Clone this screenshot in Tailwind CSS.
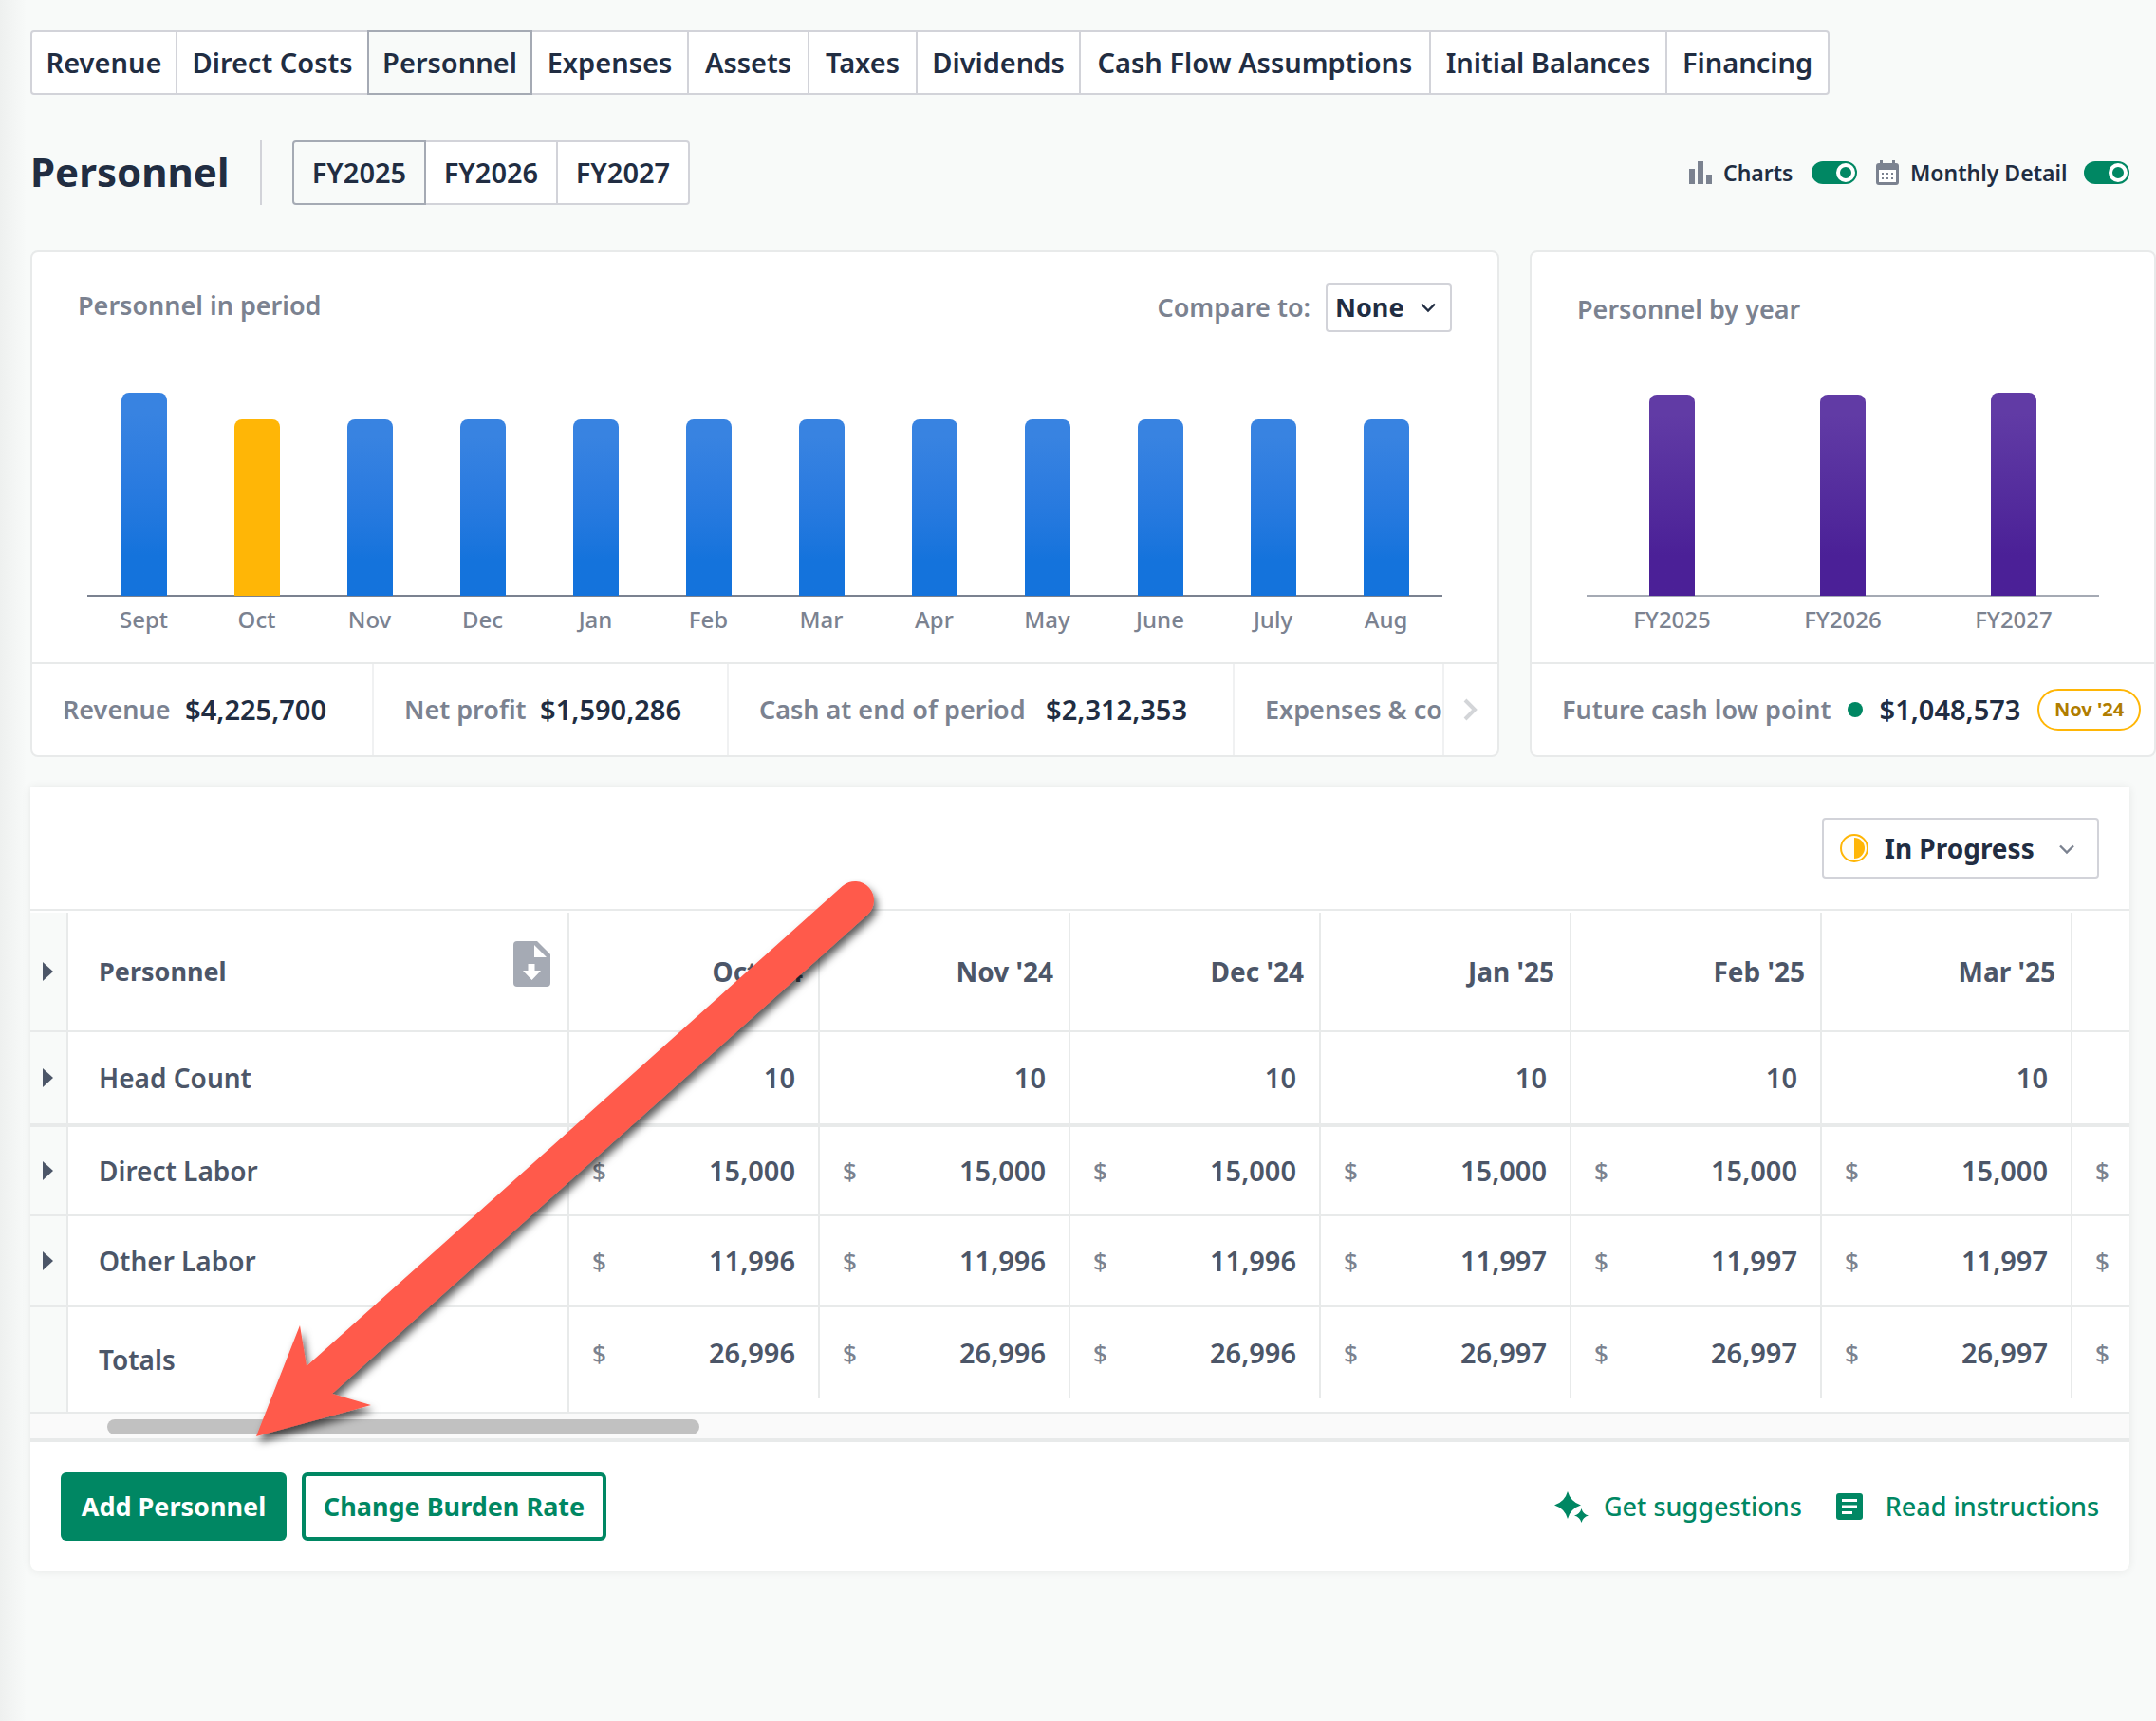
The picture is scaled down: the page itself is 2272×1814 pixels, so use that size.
<!DOCTYPE html>
<html lang="en">
<head>
<meta charset="utf-8">
<title>Personnel</title>
<script src="https://cdn.jsdelivr.net/npm/@tailwindcss/browser@4"></script>
</head>
<body class="relative min-h-screen overflow-x-hidden bg-[#f8faf9] pt-8 font-['Noto_Sans',sans-serif] text-[28px] leading-9 text-[#212d42]">
<div class="absolute inset-y-0 left-0 w-7 bg-linear-to-r from-[#eef0ef] to-[#f8faf9]"></div>

<div class="relative">
<nav class="flex px-8 text-[29px] font-semibold whitespace-nowrap" aria-label="Forecast sections">
  <a href="#" class="flex h-[68px] w-[155px] items-center justify-center rounded-l border-2 border-[#d2d3d9] bg-white">Revenue</a>
  <a href="#" class="-ml-0.5 flex h-[68px] w-[204px] items-center justify-center border-2 border-[#d2d3d9] bg-white">Direct Costs</a>
  <a href="#" aria-current="page" class="relative z-10 -ml-0.5 flex h-[68px] w-[174px] items-center justify-center border-2 border-[#a5aab4] bg-[#f8faf9]">Personnel</a>
  <a href="#" class="-ml-0.5 flex h-[68px] w-[167px] items-center justify-center border-2 border-[#d2d3d9] bg-white">Expenses</a>
  <a href="#" class="-ml-0.5 flex h-[68px] w-[129px] items-center justify-center border-2 border-[#d2d3d9] bg-white">Assets</a>
  <a href="#" class="-ml-0.5 flex h-[68px] w-[116px] items-center justify-center border-2 border-[#d2d3d9] bg-white">Taxes</a>
  <a href="#" class="-ml-0.5 flex h-[68px] w-[174px] items-center justify-center border-2 border-[#d2d3d9] bg-white">Dividends</a>
  <a href="#" class="-ml-0.5 flex h-[68px] w-[371px] items-center justify-center border-2 border-[#d2d3d9] bg-white">Cash Flow Assumptions</a>
  <a href="#" class="-ml-0.5 flex h-[68px] w-[251px] items-center justify-center border-2 border-[#d2d3d9] bg-white">Initial Balances</a>
  <a href="#" class="-ml-0.5 flex h-[68px] w-[173px] items-center justify-center rounded-r border-2 border-[#d2d3d9] bg-white">Financing</a>
</nav>

<header class="mt-12 flex h-[68px] items-center pr-7 pl-8">
  <h1 class="w-[242px] pb-0.5 text-[42px] font-bold">Personnel</h1>
  <div class="h-full w-0.5 bg-[#d2d3d9]"></div>
  <div class="ml-8 flex text-[29px] font-semibold">
    <button type="button" aria-pressed="true" class="relative z-10 h-[68px] w-[141px] rounded-l border-2 border-[#a5aab4] bg-[#f8faf9]">FY2025</button>
    <button type="button" aria-pressed="false" class="-ml-0.5 h-[68px] w-[141px] border-2 border-[#d2d3d9] bg-white">FY2026</button>
    <button type="button" aria-pressed="false" class="-ml-0.5 h-[68px] w-[141px] rounded-r border-2 border-[#d2d3d9] bg-white">FY2027</button>
  </div>
  <div class="ml-auto flex items-center text-[23px] font-semibold">
    <svg class="mr-3 size-6" viewBox="0 0 24 24" fill="#7b8290"><path d="M0 8h6v16H0zM9 0h6v24H9zM18 14h6v10h-6z"/></svg>
    <label for="charts" class="w-[81px]">Charts</label>
    <input id="charts" type="checkbox" role="switch" checked class="relative ml-3 h-6 w-12 appearance-none rounded-full bg-[#008763] before:absolute before:top-0.5 before:right-0.5 before:size-5 before:rounded-full before:border-4 before:border-white">
    <svg class="mr-3 ml-5 h-[26px] w-6" viewBox="0 0 24 26"><path fill="#7b8290" d="M4 0h3v3h10V0h3v3h1a3 3 0 0 1 3 3v17a3 3 0 0 1-3 3H3a3 3 0 0 1-3-3V6a3 3 0 0 1 3-3h1z"/><path fill="#fff" d="M3 10h18v13H3z"/><path fill="#7b8290" d="M6 13h2v2H6zM11 13h2v2h-2zM16 13h2v2h-2zM6 18h2v2H6zM11 18h2v2h-2zM16 18h2v2h-2z"/></svg>
    <label for="monthly" class="w-[171px] whitespace-nowrap">Monthly Detail</label>
    <input id="monthly" type="checkbox" role="switch" checked class="relative ml-3 h-6 w-12 appearance-none rounded-full bg-[#008763] before:absolute before:top-0.5 before:right-0.5 before:size-5 before:rounded-full before:border-4 before:border-white">
  </div>
</header>

<div class="mt-12 flex gap-8 pl-8">
  <section class="flex min-w-0 flex-1 flex-col rounded-lg border-2 border-[#e8eaea] bg-white">
    <div class="flex items-center justify-between pt-8 pr-12 pl-12">
      <h2 class="pb-1 text-[27px] font-semibold text-[#7b8290]">Personnel in period</h2>
      <div class="flex items-center gap-4">
        <label for="compare" class="text-[27px] font-semibold text-[#7b8290]">Compare to:</label>
        <div class="relative">
          <select id="compare" class="h-[52px] w-[133px] appearance-none rounded border-2 border-[#d2d3d9] bg-white pl-2 text-[27px] font-bold"><option>None</option></select>
          <svg class="pointer-events-none absolute top-[21px] right-[17px] h-[11px] w-4" viewBox="0 0 16 11" fill="none" stroke="#212d42" stroke-width="2.4"><path d="M1 1.5l7 7 7-7"/></svg>
        </div>
      </div>
    </div>
    <div class="mt-16 pr-[58px] pl-[58px]">
      <div id="month-bars" class="relative grid h-[214px] grid-cols-12 items-end justify-items-center"></div>
      <div class="-mt-px h-0.5 bg-[#7b8290]"></div>
      <div id="month-labels" class="mt-2 grid grid-cols-12 text-center text-[24px] font-medium leading-8 text-[#7b8290]"></div>
    </div>
    <div class="mt-[29px] flex h-[98px] border-t-2 border-[#e8eaea] text-[27px] font-semibold whitespace-nowrap">
      <div class="flex w-[360px] shrink-0 items-center justify-between border-r-2 border-[#f0f1f2] pr-12 pl-8"><span class="text-[#7b8290]">Revenue</span><span class="text-[29px]">$4,225,700</span></div>
      <div class="flex w-[374px] shrink-0 items-center justify-between border-r-2 border-[#f0f1f2] pr-12 pl-8"><span class="text-[#7b8290]">Net profit</span><span class="text-[29px]">$1,590,286</span></div>
      <div class="flex w-[533px] shrink-0 items-center justify-between border-r-2 border-[#f0f1f2] pr-12 pl-8"><span class="text-[#7b8290]">Cash at end of period</span><span class="text-[29px]">$2,312,353</span></div>
      <div class="flex min-w-0 flex-1 items-center overflow-hidden pl-8 text-[#7b8290]">Expenses &amp; costs</div>
      <button type="button" aria-label="Next figures" class="flex w-[58px] shrink-0 items-center justify-center border-l-2 border-[#f0f1f2]"><svg class="h-6 w-4" viewBox="0 0 16 24" fill="none" stroke="#d3d5d8" stroke-width="4"><path d="M2 2l10 10L2 22"/></svg></button>
    </div>
  </section>

  <section class="flex w-[660px] shrink-0 flex-col rounded-lg border-2 border-[#e8eaea] bg-white">
    <h2 class="pt-[42px] pl-12 text-[27px] font-semibold text-[#7b8290]">Personnel by year</h2>
    <div class="mt-[70px] px-[58px]">
      <div id="year-bars" class="relative grid h-[214px] grid-cols-3 items-end justify-items-center"></div>
      <div class="-mt-px h-0.5 bg-[#a5aab4]"></div>
      <div id="year-labels" class="mt-2 grid grid-cols-3 text-center text-[24px] font-medium leading-8 text-[#7b8290]"></div>
    </div>
    <div class="mt-[29px] flex h-[98px] items-center justify-between border-t-2 border-[#e8eaea] pr-3.5 pl-8 text-[27px] font-semibold whitespace-nowrap">
      <span class="text-[#7b8290]">Future cash low point</span>
      <span class="size-4 rounded-full bg-[#008763]"></span>
      <span class="text-[29px]">$1,048,573</span>
      <span class="flex h-11 w-[109px] items-center justify-center rounded-full border-2 border-[#ffb606] text-[20px] font-bold text-[#b07d00]">Nov '24</span>
    </div>
  </section>
</div>

<section class="mt-8 mr-7 ml-8 overflow-hidden rounded-b-lg bg-white shadow-[0_0_10px_rgba(0,0,0,0.08)]">
  <div class="flex h-[130px] items-center justify-end border-b-2 border-[#e8eaea] pr-8">
    <div class="relative">
      <svg class="pointer-events-none absolute top-[17px] left-[19px] size-[30px]" viewBox="0 0 30 30"><circle cx="15" cy="15" r="14" fill="#fffdf7" stroke="#ffb606" stroke-width="2"/><path d="M15 4a11 11 0 0 1 0 22z" fill="#ffb606"/></svg>
      <select aria-label="Status" class="h-16 w-[292px] appearance-none rounded border-2 border-[#d2d3d9] bg-white pl-16 text-[28px] font-bold"><option>In Progress</option></select>
      <svg class="pointer-events-none absolute top-[28px] right-[26px] h-[11px] w-4" viewBox="0 0 16 11" fill="none" stroke="#7b8290" stroke-width="2.4"><path d="M1 1.5l7 7 7-7"/></svg>
    </div>
  </div>
  <div class="overflow-hidden pt-0.5">
    <table class="w-full table-fixed border-separate border-spacing-0 text-[#4c5668]">
      <colgroup><col class="w-10"><col class="w-[528px]"><col class="w-[264px]"><col class="w-[264px]"><col class="w-[264px]"><col class="w-[264px]"><col class="w-[264px]"><col class="w-[264px]"><col></colgroup>
      <thead id="plan-head"></thead>
      <tbody id="plan-body"></tbody>
    </table>
  </div>
  <div class="h-[30px] border-b-4 border-[#e8eaea] bg-[#fafafa] pt-1.5 pl-[81px]">
    <div class="h-4 w-[624px] rounded-full bg-[#c1c1c1]"></div>
  </div>
  <div class="flex items-center gap-4 p-8 text-[27px]">
    <button type="button" class="h-[72px] w-[238px] rounded-md bg-[#008763] font-bold text-white">Add Personnel</button>
    <button type="button" class="h-[72px] w-[321px] rounded-md border-4 border-[#008763] bg-white font-bold text-[#008763]">Change Burden Rate</button>
    <a href="#" class="ml-auto flex items-center gap-4 font-medium text-[#008763]">
      <svg class="h-[33px] w-9" viewBox="0 0 36 33" fill="#008763"><path d="M14 0q3 11 14 14.500q-11 3.500-14 14.500q-3-11-14-14.500q11-3.500 14-14.500zM28.500 18q1.500 6 7.500 7.500q-6 1.500-7.500 7.500q-1.500-6-7.500-7.500q6-1.500 7.500-7.500z"/></svg>
      Get suggestions</a>
    <a href="#" class="ml-5 flex items-center gap-6 font-medium text-[#008763]">
      <svg class="size-7" viewBox="0 0 28 28"><rect width="28" height="28" rx="3" fill="#008763"/><path d="M6 7.500h16M6 14h16M6 20.500h11" stroke="#fff" stroke-width="3"/></svg>
      Read instructions</a>
  </div>
</section>
</div>

<svg class="pointer-events-none absolute top-[900px] left-[240px] h-[660px] w-[720px]" viewBox="240 900 720 660" aria-hidden="true">
  <defs><filter id="arrow-shadow" x="-10%" y="-10%" width="120%" height="120%"><feDropShadow dx="3" dy="6" stdDeviation="4" flood-color="#000" flood-opacity="0.65"/></filter></defs>
  <path filter="url(#arrow-shadow)" fill="#ff5a4b" d="M270 1514L316 1397L323 1440L887.700 934A20 20 0 0 1 914.300 964L350 1469L391 1481Z"/>
</svg>

<script>
const byId = id => document.getElementById(id);

const months = [['Sept',214],['Oct',186],['Nov',186],['Dec',186],['Jan',186],['Feb',186],['Mar',186],['Apr',186],['May',186],['June',186],['July',186],['Aug',186]];
byId('month-bars').innerHTML = months.map(([m, h]) => m === 'Oct'
  ? `<div class="z-10 w-12 rounded-t-lg bg-[#ffb606]" style="height:${h}px"></div>`
  : `<div class="z-10 w-12 rounded-t-lg bg-linear-to-b from-[#3883e1] from-10% via-[#2c7ce0] via-40% to-[#1473dc] to-80%" style="height:${h}px"></div>`).join('');
byId('month-labels').innerHTML = months.map(([m]) => `<span>${m}</span>`).join('');

const years = [['FY2025',212],['FY2026',212],['FY2027',214]];
byId('year-bars').innerHTML = years.map(([, h]) => `<div class="z-10 w-12 rounded-t-lg bg-linear-to-b from-[#613ba5] from-10% to-[#4b2097] to-80%" style="height:${h}px"></div>`).join('');
byId('year-labels').innerHTML = years.map(([y]) => `<span>${y}</span>`).join('');

const caret = '<svg class="ml-[13px] h-5 w-[11px]" viewBox="0 0 11 20" fill="#4c5668"><path d="M0 0l11 10L0 20z"/></svg>';
const file = '<svg class="mb-4 h-12 w-[39px]" viewBox="0 0 39 48"><path fill="#a5aab4" d="M4 0h21l14 14v30a4 4 0 0 1-4 4H4a4 4 0 0 1-4-4V4a4 4 0 0 1 4-4z"/><path fill="#fff" d="M22 4v13h13zM15.500 24h7v7H29l-9.500 10L10 31h5.500z"/></svg>';
const heads = ["Oct '24","Nov '24","Dec '24","Jan '25","Feb '25","Mar '25"];
byId('plan-head').innerHTML = `<tr class="h-[126px]">
  <td class="border-r-2 border-b-2 border-[#e8eaea] bg-[#f8faf9] p-0">${caret}</td>
  <th scope="col" class="border-r-2 border-b-2 border-[#e8eaea] py-0 pr-[18px] pl-8 text-left font-bold"><div class="flex items-center justify-between text-[27px]">Personnel${file}</div></th>
  ${heads.map(h => `<th scope="col" class="border-r-2 border-b-2 border-[#e8eaea] py-0 pr-4 pl-0 text-right text-[28px] font-bold">${h}</th>`).join('')}
  <td class="border-b-2 border-[#e8eaea] p-0"></td></tr>`;

const money = v => `<div class="flex items-center justify-between px-6"><span class="text-[26px] font-medium text-[#7b8290]">$</span><span>${v}</span></div>`;
const rows = [['Direct Labor','15,000','15,000'],['Other Labor','11,996','11,997']];
const cols = [0,1,2,3,4,5];
byId('plan-body').innerHTML = `<tr class="h-[100px]">
  <td class="border-r-2 border-b-4 border-[#e8eaea] bg-[#f8faf9] p-0">${caret}</td>
  <th scope="row" class="border-r-2 border-b-4 border-[#e8eaea] py-0 pl-8 text-left font-semibold">Head Count</th>
  ${cols.map(() => '<td class="border-r-2 border-b-4 border-[#e8eaea] py-0 pr-6 pl-0 text-right text-[29px] font-semibold">10</td>').join('')}
  <td class="border-b-4 border-[#e8eaea] p-0"></td></tr>`
+ rows.map(([n, a, b], i) => `<tr class="${i ? 'h-[96px]' : 'h-[94px]'}">
  <td class="border-r-2 border-b-2 border-[#e8eaea] bg-[#f8faf9] p-0">${caret}</td>
  <th scope="row" class="border-r-2 border-b-2 border-[#e8eaea] py-0 pl-8 text-left font-semibold">${n}</th>
  ${cols.map(c => `<td class="border-r-2 border-b-2 border-[#e8eaea] p-0 text-[29px] font-semibold">${money(c < 3 ? a : b)}</td>`).join('')}
  <td class="border-b-2 border-[#e8eaea] p-0">${money('')}</td></tr>`).join('')
+ `<tr class="h-[112px]">
  <td class="border-r-2 border-b-2 border-[#e8eaea] bg-[#f8faf9] p-0"></td>
  <th scope="row" class="border-r-2 border-b-2 border-[#e8eaea] py-0 pl-8 text-left font-semibold">Totals</th>
  ${cols.map(c => `<td class="border-b-2 border-[#e8eaea] p-0 align-top text-[29px] font-semibold"><div class="flex h-24 flex-col justify-center border-r-2 border-[#e8eaea]">${money(c < 3 ? '26,996' : '26,997')}</div></td>`).join('')}
  <td class="border-b-2 border-[#e8eaea] p-0 align-top"><div class="flex h-24 flex-col justify-center">${money('')}</div></td></tr>`;
</script>
</body>
</html>
